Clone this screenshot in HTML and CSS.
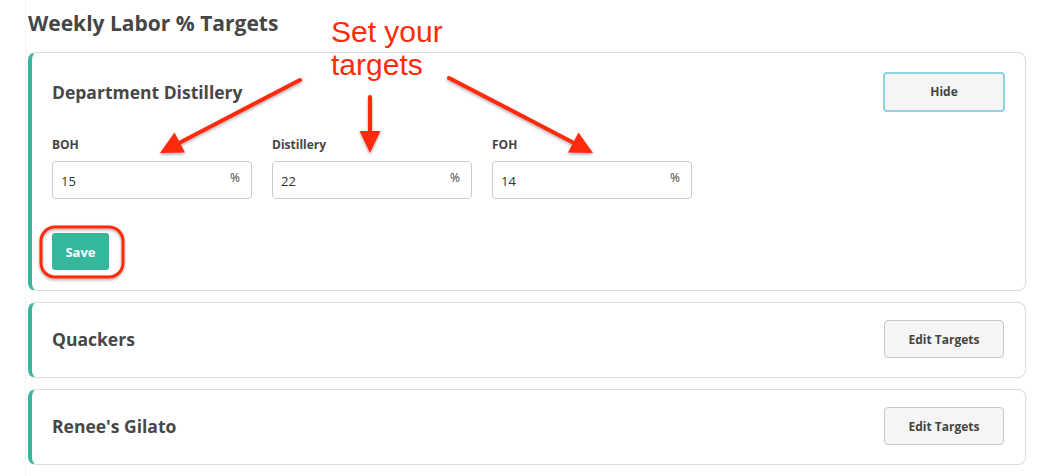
FILE: index.html
```html
<!DOCTYPE html>
<html lang="en">
<head>
    <meta charset="UTF-8">
    <meta name="viewport" content="width=device-width, initial-scale=1.0">
    <title>Weekly Labor % Targets</title>
    <link rel="stylesheet" href="styles.css">
</head>
<body>
    <div class="page">
        <h1 class="page-title">Weekly Labor % Targets</h1>

        <div class="card">
            <div class="card-head">
                <h2 class="card-title">Department Distillery</h2>
                <button class="btn btn-focus">Hide</button>
            </div>
            <div class="fields">
                <div class="field">
                    <label>BOH</label>
                    <div class="input-wrap">
                        <input type="text" value="15">
                        <span class="unit">%</span>
                    </div>
                </div>
                <div class="field">
                    <label>Distillery</label>
                    <div class="input-wrap">
                        <input type="text" value="22">
                        <span class="unit">%</span>
                    </div>
                </div>
                <div class="field">
                    <label>FOH</label>
                    <div class="input-wrap">
                        <input type="text" value="14">
                        <span class="unit">%</span>
                    </div>
                </div>
            </div>
            <button class="btn-save">Save</button>
        </div>

        <div class="card">
            <div class="card-head short">
                <h2 class="card-title">Quackers</h2>
                <button class="btn">Edit Targets</button>
            </div>
        </div>

        <div class="card">
            <div class="card-head short">
                <h2 class="card-title">Renee's Gilato</h2>
                <button class="btn">Edit Targets</button>
            </div>
        </div>

        <div class="card"></div>
    </div>

    <!-- annotation layer -->
    <div class="note">Set your<br>targets</div>
    <svg class="marks" width="1052" height="476" viewBox="0 0 1052 476">
        <defs>
            <filter id="shade" x="-20%" y="-20%" width="140%" height="140%">
                <feDropShadow dx="0" dy="1.5" stdDeviation="1.5" flood-color="#000" flood-opacity="0.35"/>
            </filter>
        </defs>
        <g filter="url(#shade)" fill="#ff2a0c" stroke="#ff2a0c">
            <line x1="300" y1="80" x2="180" y2="142.5" stroke-width="4" stroke-linecap="round"/>
            <polygon points="160,153 185,152.5 174.5,132.5" stroke="none"/>

            <line x1="370" y1="97" x2="370" y2="132" stroke-width="4" stroke-linecap="round"/>
            <polygon points="370,153 359.5,131 380.5,131" stroke="none"/>

            <line x1="449" y1="78" x2="573" y2="142.5" stroke-width="4" stroke-linecap="round"/>
            <polygon points="593,153 568,152.5 578.5,132.5" stroke="none"/>

            <rect x="41" y="227" width="82" height="50" rx="14" fill="none" stroke-width="3"/>
        </g>
    </svg>
</body>
</html>
```

FILE: styles.css
```css
body { margin: 0; background: #fff; font-family: "Open Sans", Arial, sans-serif; color: #444; overflow: hidden; }
.page { margin-left: 25px; padding-left: 2px; width: 998px; border-left: 1px solid #f2f2f2; }
.page-title { margin: 0; padding-top: 9px; height: 43px; font-size: 21px; font-weight: 700; color: #464646; }

.card { position: relative; border: 1px solid #dcdcdc; border-left: 4px solid #37b89d; border-radius: 8px; padding: 19px 20px 20px 20px; margin-bottom: 11px; }
.card:last-child { height: 20px; padding: 0; }
.card-head { display: flex; align-items: center; justify-content: space-between; height: 39px; }
.card-head.short { height: 38px; margin: -2px 0 -1px 0; }
.card-title { margin: 0; font-size: 17.5px; font-weight: 700; color: #474747; }

.btn { width: 120px; height: 38px; margin-right: 1px; border: 1px solid #c8c8c8; border-radius: 4px; background: #f5f5f5; color: #444; font-family: inherit; font-size: 12px; font-weight: 700; cursor: pointer; }
.btn-focus { border: 2px solid #8fd4e6; width: 122px; height: 40px; margin-right: 0; }

.fields { display: flex; gap: 20px; margin-top: 26px; }
.field label { display: block; font-size: 12px; font-weight: 700; line-height: 16px; margin-bottom: 8px; color: #444; }
.input-wrap { position: relative; width: 200px; }
.input-wrap input { box-sizing: border-box; width: 200px; height: 38px; border: 1px solid #cccccc; border-radius: 4px; padding: 2px 8px 0 8px; font-family: inherit; font-size: 13px; color: #333; outline: none; }
.unit { position: absolute; right: 12px; top: 8px; font-size: 12px; color: #444; }

.btn-save { margin-top: 34px; width: 57px; height: 37px; border: none; border-radius: 3px; background: #35b79c; color: #fff; font-family: inherit; font-size: 13px; font-weight: 700; cursor: pointer; }

.note { position: absolute; left: 331px; top: 15px; font-family: "Liberation Sans", Arial, sans-serif; font-size: 30px; line-height: 33px; color: #ff2a0c; }
.marks { position: absolute; left: 0; top: 0; pointer-events: none; }
```
